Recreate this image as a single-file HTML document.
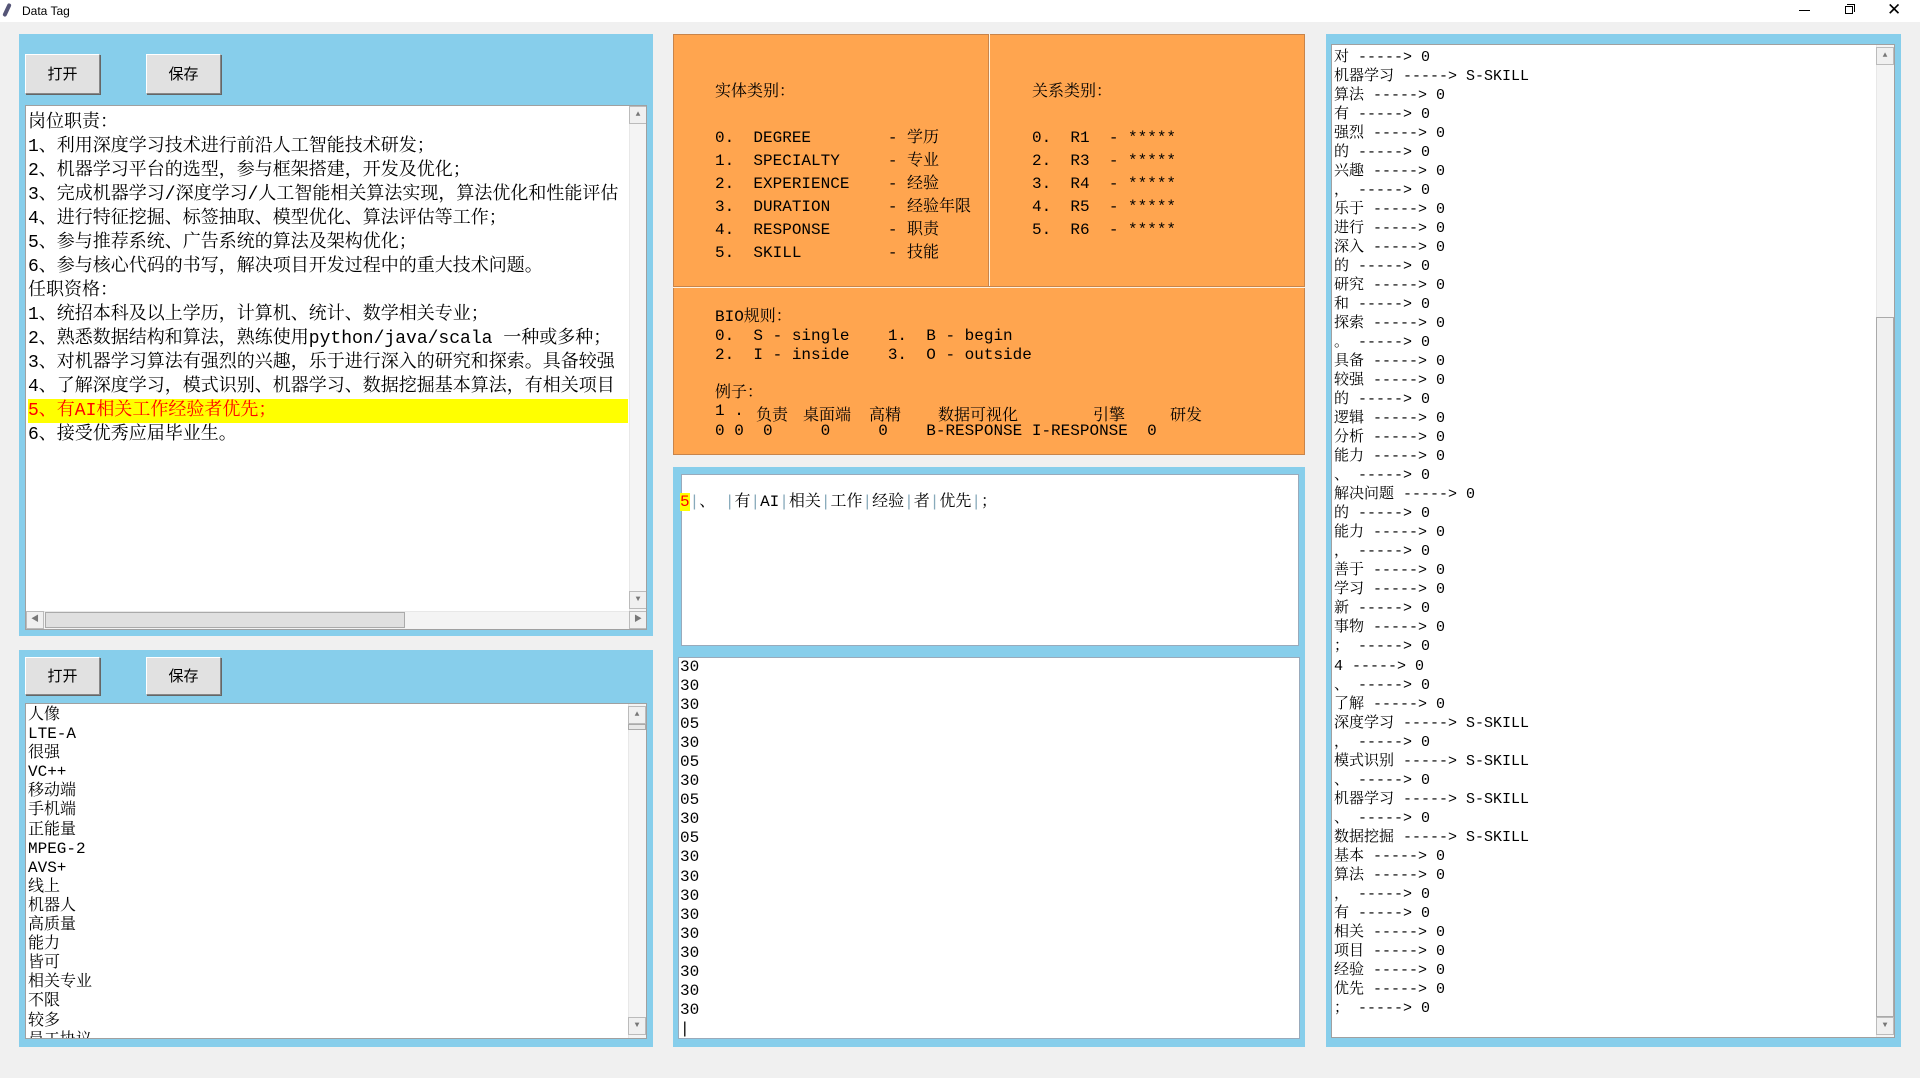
<!DOCTYPE html>
<html><head><meta charset="utf-8"><style>
*{margin:0;padding:0;box-sizing:border-box}
body{width:1920px;height:1078px;background:#f0f0f0;position:relative;overflow:hidden;font-family:"Liberation Mono","Noto Serif CJK SC",serif;color:#000}
.a{position:absolute}
.pre{white-space:pre}
.title{left:0;top:0;width:1920px;height:22px;background:#fff;font:12px "Liberation Sans",sans-serif}
.blue{background:#87ceeb}
.btn{position:absolute;background:#e1e1e1;border:1px solid #fff;border-right-color:#888;border-bottom-color:#888;box-shadow:1px 1px 0 #666;font:15px "Noto Sans CJK SC",sans-serif;text-align:center;line-height:38px}
.white{background:#fff;border:1px solid #a0a0a0}
.sb{position:absolute;background:#f4f4f4;border-left:1px solid #e8e8e8}
.arr{position:absolute;width:18px;height:18px;background:#f0f0f0;border:1px solid #bbb;font-size:8px;color:#777;text-align:center;line-height:16px}
.or{background:#ffa54f}
</style></head><body>
<div class="a title">
<div class="a" style="left:5px;top:3px;width:4px;height:14px;background:#557;transform:rotate(25deg);border-radius:2px"></div>
<div class="a" style="left:22px;top:4px">Data Tag</div>
<div class="a" style="left:1799px;top:10px;width:11px;height:1px;background:#000"></div>
<div class="a" style="left:1845px;top:6px;width:8px;height:8px;border:1px solid #000"></div>
<div class="a" style="left:1847px;top:4px;width:8px;height:8px;border-top:1px solid #000;border-right:1px solid #000"></div>
<div class="a" style="left:1887px;top:0px;font-size:17px;font-family:'Liberation Sans'">✕</div>
</div>

<!-- left top panel -->
<div class="a blue" style="left:19px;top:34px;width:634px;height:602px"></div>
<div class="btn" style="left:25px;top:54px;width:75px;height:40px">打开</div>
<div class="btn" style="left:146px;top:54px;width:75px;height:40px">保存</div>
<div class="a white" style="left:25px;top:105px;width:622px;height:525px;overflow:hidden">
<div class="a pre" style="left:2px;top:5px;font-size:18px;line-height:24px;width:600px;overflow:hidden">岗位职责：
1、利用深度学习技术进行前沿人工智能技术研发；
2、机器学习平台的选型，参与框架搭建，开发及优化；
3、完成机器学习/深度学习/人工智能相关算法实现，算法优化和性能评估
4、进行特征挖掘、标签抽取、模型优化、算法评估等工作；
5、参与推荐系统、广告系统的算法及架构优化；
6、参与核心代码的书写，解决项目开发过程中的重大技术问题。
任职资格：
1、统招本科及以上学历，计算机、统计、数学相关专业；
2、熟悉数据结构和算法，熟练使用python/java/scala 一种或多种；
3、对机器学习算法有强烈的兴趣，乐于进行深入的研究和探索。具备较强
4、了解深度学习，模式识别、机器学习、数据挖掘基本算法，有相关项目
<span style="background:#ff0;color:#f00;display:inline-block;width:603px">5、有AI相关工作经验者优先；</span>
6、接受优秀应届毕业生。</div>
<div class="sb" style="left:603px;top:0;width:18px;height:505px"></div>
<div class="arr" style="left:603px;top:0">▲</div>
<div class="arr" style="left:603px;top:485px">▼</div>
<div class="sb" style="left:0;top:505px;width:621px;height:18px;border-top:1px solid #e8e8e8"></div>
<div class="arr" style="left:0;top:505px">◀</div>
<div class="a" style="left:19px;top:506px;width:360px;height:16px;background:#e0e0e0;border:1px solid #aaa"></div>
<div class="arr" style="left:603px;top:505px">▶</div>
</div>

<!-- left bottom panel -->
<div class="a blue" style="left:19px;top:650px;width:634px;height:397px"></div>
<div class="btn" style="left:25px;top:657px;width:75px;height:38px;line-height:36px">打开</div>
<div class="btn" style="left:146px;top:657px;width:75px;height:38px;line-height:36px">保存</div>
<div class="a white" style="left:25px;top:703px;width:622px;height:336px;overflow:hidden">
<div class="a pre" style="left:2px;top:2px;font-size:16px;line-height:19.1px">人像
LTE-A
很强
VC++
移动端
手机端
正能量
MPEG-2
AVS+
线上
机器人
高质量
能力
皆可
相关专业
不限
较多
员工协议</div>
<div class="sb" style="left:602px;top:0;width:18px;height:334px"></div>
<div class="arr" style="left:602px;top:2px">▲</div>
<div class="a" style="left:602px;top:20px;width:18px;height:6px;background:#e8e8e8;border:1px solid #aaa"></div>
<div class="arr" style="left:602px;top:313px">▼</div>
</div>

<!-- orange -->
<div class="a or" style="left:673px;top:34px;width:632px;height:421px;border:1px solid #c8844a"></div>
<div class="a" style="left:988px;top:34px;width:2px;height:253px;background:#fff2e0;border-left:1px solid #c8844a"></div>
<div class="a" style="left:673px;top:286px;width:632px;height:2px;background:#fff2e0;border-top:1px solid #c8844a"></div>
<div class="a pre" style="left:715px;top:81px;font-size:16px;line-height:23px">实体类别：

0.  DEGREE        - 学历
1.  SPECIALTY     - 专业
2.  EXPERIENCE    - 经验
3.  DURATION      - 经验年限
4.  RESPONSE      - 职责
5.  SKILL         - 技能</div>
<div class="a pre" style="left:1032px;top:81px;font-size:16px;line-height:23px">关系类别：

0.  R1  - *****
2.  R3  - *****
3.  R4  - *****
4.  R5  - *****
5.  R6  - *****</div>
<div class="a pre" style="left:715px;top:308px;font-size:16px;line-height:19px">BIO规则：
0.  S - single    1.  B - begin
2.  I - inside    3.  O - outside

例子：</div>
<div class="a pre" style="left:715px;top:402px;font-size:16px;line-height:19px">1 .</div>
<div class="a pre" style="left:756px;top:402px;font-size:16px">负责</div>
<div class="a pre" style="left:803px;top:402px;font-size:16px">桌面端</div>
<div class="a pre" style="left:869px;top:402px;font-size:16px">高精</div>
<div class="a pre" style="left:938px;top:402px;font-size:16px">数据可视化</div>
<div class="a pre" style="left:1093px;top:402px;font-size:16px">引擎</div>
<div class="a pre" style="left:1170px;top:402px;font-size:16px">研发</div>
<div class="a pre" style="left:715px;top:422px;font-size:16px">0 0  0     0     0    B-RESPONSE I-RESPONSE  0</div>

<!-- middle blue -->
<div class="a blue" style="left:673px;top:467px;width:632px;height:580px"></div>
<div class="a" style="left:681px;top:474px;width:618px;height:172px;background:#fff;border:1px solid #9ab"></div>
<div class="a pre" style="left:680px;top:492px;font-size:16px;line-height:20px"><span style="background:#ff0;color:#f00">5</span><span style="color:#8ab">|</span>、 <span style="color:#8ab">|</span>有<span style="color:#8ab">|</span>AI<span style="color:#8ab">|</span>相关<span style="color:#8ab">|</span>工作<span style="color:#8ab">|</span>经验<span style="color:#8ab">|</span>者<span style="color:#8ab">|</span>优先<span style="color:#8ab">|</span>；</div>
<div class="a" style="left:678px;top:657px;width:622px;height:382px;background:#fff;border:1px solid #9ab"></div>
<div class="a pre" style="left:680px;top:658px;font-size:16px;line-height:19.05px">30
30
30
05
30
05
30
05
30
05
30
30
30
30
30
30
30
30
30
|</div>

<!-- right -->
<div class="a blue" style="left:1326px;top:34px;width:575px;height:1013px"></div>
<div class="a white" style="left:1331px;top:44px;width:564px;height:994px;overflow:hidden">
<div class="a pre" style="left:2px;top:3px;font-size:15px;line-height:19.02px">对 -----> 0
机器学习 -----> S-SKILL
算法 -----> 0
有 -----> 0
强烈 -----> 0
的 -----> 0
兴趣 -----> 0
， -----> 0
乐于 -----> 0
进行 -----> 0
深入 -----> 0
的 -----> 0
研究 -----> 0
和 -----> 0
探索 -----> 0
。 -----> 0
具备 -----> 0
较强 -----> 0
的 -----> 0
逻辑 -----> 0
分析 -----> 0
能力 -----> 0
、 -----> 0
解决问题 -----> 0
的 -----> 0
能力 -----> 0
， -----> 0
善于 -----> 0
学习 -----> 0
新 -----> 0
事物 -----> 0
； -----> 0
4 -----> 0
、 -----> 0
了解 -----> 0
深度学习 -----> S-SKILL
， -----> 0
模式识别 -----> S-SKILL
、 -----> 0
机器学习 -----> S-SKILL
、 -----> 0
数据挖掘 -----> S-SKILL
基本 -----> 0
算法 -----> 0
， -----> 0
有 -----> 0
相关 -----> 0
项目 -----> 0
经验 -----> 0
优先 -----> 0
； -----> 0</div>
<div class="sb" style="left:544px;top:0;width:18px;height:992px"></div>
<div class="arr" style="left:544px;top:2px">▲</div>
<div class="a" style="left:544px;top:272px;width:18px;height:700px;background:#f0f0f0;border:1px solid #aaa"></div>
<div class="arr" style="left:544px;top:972px">▼</div>
</div>
</body></html>
